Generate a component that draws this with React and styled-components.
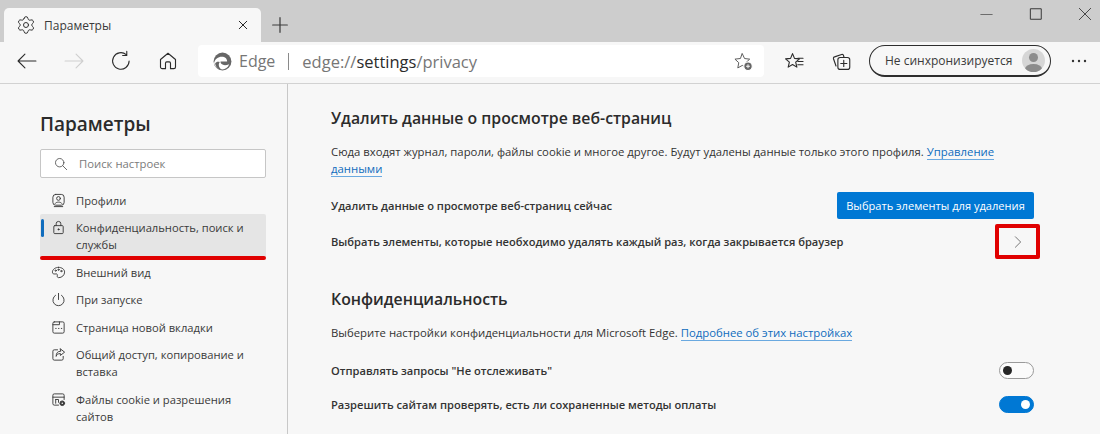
import styled, { createGlobalStyle } from 'styled-components';
import { Settings } from 'lucide-react';

const GlobalStyle = createGlobalStyle`
    html, body {
        margin: 0;
        padding: 0;
        height: 100%;
        overflow: hidden;
        background: #f7f7f7;
    }
    * {
        box-sizing: border-box;
    }
    #root {
        font-family: 'Open Sans', 'Noto Sans', sans-serif;
    }
`;

const Window = styled.div`
    width: 1100px;
    height: 434px;
    display: flex;
    flex-direction: column;
    overflow: hidden;
    color: #2b2b2b;
`;
const TitleBar = styled.div`
    height: 42px;
    flex: none;
    background: #cdcdcd;
    display: flex;
    align-items: flex-end;
    padding-left: 4px;
`;
const Tab = styled.div`
    width: 257px;
    height: 34px;
    background: #f7f7f7;
    border-radius: 5px 5px 0 0;
    display: flex;
    align-items: center;
    padding: 0 12px 0 12px;
    gap: 8px;
    font-size: 12px;
    color: #3a3a3a;
`;
const TabTitle = styled.span`
    flex: 1;
`;
const NewTab = styled.div`
    width: 38px;
    height: 34px;
    display: flex;
    align-items: center;
    justify-content: center;
`;
const WindowControls = styled.div`
    margin-left: auto;
    margin-right: -9px;
    height: 42px;
    display: flex;
    align-items: flex-start;
    padding-top: 6px;
`;
const WindowButton = styled.div`
    width: 49px;
    height: 16px;
    display: flex;
    align-items: center;
    justify-content: center;
`;
const Toolbar = styled.div`
    height: 42px;
    flex: none;
    background: #f7f7f7;
    border-bottom: 1px solid #d2d2d2;
    display: flex;
    align-items: center;
    padding: 0 0 3px 8px;
`;
const ToolButton = styled.div`
    width: ${(p) => p.$w || 47}px;
    height: 32px;
    flex: none;
    display: flex;
    align-items: center;
    justify-content: center;
`;
const AddressBar = styled.div`
    width: 566px;
    height: 32px;
    margin-left: 2px;
    flex: none;
    background: #fff;
    border-radius: 4px;
    display: flex;
    align-items: center;
    padding: 0 11px 0 15px;
    font-size: 16px;
    color: #767676;
`;
const BrandName = styled.span`
    margin-left: 7px;
`;
const Divider = styled.span`
    width: 1px;
    height: 17px;
    background: #8a8a8a;
    margin: 0 13px;
`;
const UrlText = styled.span`
    font-size: 16.5px;
`;
const Strong = styled.span`
    color: #2b2b2b;
`;
const AddressEnd = styled.div`
    margin-left: auto;
    display: flex;
    align-items: center;
`;
const SyncPill = styled.div`
    width: 182px;
    height: 32px;
    margin-left: 11px;
    flex: none;
    border: 1px solid #2e2e2e;
    border-bottom-width: 2px;
    border-radius: 16px;
    display: flex;
    align-items: center;
    justify-content: space-between;
    padding: 0 5px 0 15px;
    font-size: 12px;
    color: #3a3a3a;
`;
const Avatar = styled.div`
    width: 23px;
    height: 23px;
    border-radius: 50%;
    overflow: hidden;
    background: #d6d6d6;
`;
const Body = styled.div`
    flex: 1;
    min-height: 0;
    display: flex;
`;
const Sidebar = styled.aside`
    width: 288px;
    flex: none;
    border-right: 1px solid #c8c8c8;
    padding: 27px 21px 0 40px;
`;
const SidebarTitle = styled.h1`
    margin: 0 0 11px;
    font-size: 19px;
    line-height: 27px;
    font-weight: 600;
    color: #2b2b2b;
`;
const Search = styled.div`
    height: 29px;
    background: #fff;
    border: 1px solid #c6c6c6;
    border-radius: 2px;
    display: flex;
    align-items: center;
    padding-left: 13px;
    gap: 11px;
    font-size: 11.3px;
    color: #7b7b7b;
    margin-bottom: 8.5px;
`;
const NavList = styled.nav`
    display: flex;
    flex-direction: column;
`;
const NavItem = styled.div`
    position: relative;
    display: flex;
    align-items: flex-start;
    padding: 5px 6px 5px 10px;
    gap: 10px;
    font-size: 11.2px;
    line-height: 17px;
    color: #3a3a3a;
    background: ${(p) => (p.$active ? '#e5e5e5' : 'transparent')};
    border-radius: 2px;
    margin-bottom: 0.5px;
`;
const NavIcon = styled.span`
    width: 16px;
    height: 17px;
    flex: none;
    display: flex;
    align-items: center;
    justify-content: center;
`;
const ActiveMark = styled.span`
    position: absolute;
    left: 1px;
    top: 5px;
    width: 3px;
    height: 18px;
    border-radius: 2px;
    background: #0f6cbd;
`;
const RedLine = styled.span`
    position: absolute;
    left: 0;
    right: 0;
    bottom: -2px;
    height: 4px;
    border-radius: 2px;
    background: #e00000;
`;
const Main = styled.main`
    flex: 1;
    padding: 23px 66px 0 43px;
`;
const Heading = styled.h2`
    margin: ${(p) => p.$top || 0}px 0 0;
    font-size: 15.8px;
    line-height: 22px;
    font-weight: 600;
    color: #2b2b2b;
`;
const Description = styled.p`
    margin: 14px 0 0;
    font-size: 11.33px;
    line-height: 17px;
    color: #333;
`;
const Link = styled.a`
    color: #0f6cbd;
    border-bottom: 1px solid #6aa9e0;
`;
const SettingRow = styled.div`
    display: flex;
    align-items: center;
    justify-content: space-between;
    height: ${(p) => p.$h || 36}px;
    margin-top: ${(p) => p.$top || 0}px;
    font-size: 11.13px;
    font-weight: 600;
    color: #333;
`;
const BlueButton = styled.button`
    width: 197px;
    height: 27px;
    border: 0;
    border-radius: 2px;
    background: #0078d4;
    color: #fff;
    font: 500 11.1px 'Open Sans', 'Noto Sans', sans-serif;
    padding: 0;
`;
const ChevronBox = styled.div`
    position: relative;
    width: 45px;
    height: 35px;
    margin-right: -6px;
    border: 4px solid #e00000;
    border-radius: 2px;
    display: flex;
    align-items: center;
    justify-content: center;
`;
const Toggle = styled.div`
    width: 35px;
    height: 17px;
    border-radius: 9px;
    border: 1px solid ${(p) => (p.$on ? '#0078d4' : '#9a9a9a')};
    background: ${(p) => (p.$on ? '#0078d4' : '#fbfbfb')};
    display: flex;
    align-items: center;
    justify-content: ${(p) => (p.$on ? 'flex-end' : 'flex-start')};
    padding: 0 3px;
`;
const Knob = styled.span`
    width: 9px;
    height: 9px;
    border-radius: 50%;
    background: ${(p) => (p.$on ? '#fff' : '#252525')};
`;

const Ico = ({ size = 16, stroke = '#3c3c3c', sw = 1.1, children }) => (
    <svg width={size} height={size} viewBox="0 0 16 16" fill="none" stroke={stroke} strokeWidth={sw} strokeLinecap="round" strokeLinejoin="round">
        {children}
    </svg>
);

const navItems = [
    { label: 'Профили', icon: <><rect x="2" y="1.500" width="12" height="11.500" rx="3" /><circle cx="8" cy="5.800" r="2" /><path d="M4.500 11c.8-1.800 6.200-1.800 7 0M3.500 14.500h9" /></> },
    { label: 'Конфиденциальность, поиск и службы', active: true, icon: <><rect x="3" y="6" width="10" height="8.500" rx="1" /><path d="M5.500 6V4a2.500 2.500 0 0 1 5 0v2" /><circle cx="8" cy="10" r=".6" fill="#3c3c3c" /></> },
    { label: 'Внешний вид', icon: <><path d="M8 2.500c-3.600 0-6.500 2.300-6.500 5.200 0 2.200 2.400 2 3.800 1.800 1.500-.2 1.700 1 1.400 2-.3 1.200.4 2 1.500 2 3.500 0 6.300-2.700 6.300-5.900 0-3-2.800-5.100-6.500-5.100z" /><circle cx="5" cy="6" r=".7" /><circle cx="8" cy="5" r=".7" /><circle cx="11" cy="6.500" r=".7" /></> },
    { label: 'При запуске', icon: <path d="M8 1.500v6.500M4.800 3.500a6 6 0 1 0 6.400 0" /> },
    { label: 'Страница новой вкладки', icon: <><rect x="2" y="2" width="12" height="12" rx="1.500" /><path d="M2 5h7V2M5 9h.5M8 9h.5M11 9h.5" /></> },
    { label: 'Общий доступ, копирование и вставка', icon: <><path d="M7 3H3.500A1.500 1.500 0 0 0 2 4.500v8A1.500 1.500 0 0 0 3.500 14h8a1.500 1.500 0 0 0 1.500-1.500V10" /><path d="M10 2l4.500 3.500L10 9V7c-2.500 0-4 1-4.500 3 0-3.500 1.500-5.500 4.500-5.500z" /></> },
    { label: 'Файлы cookie и разрешения сайтов', icon: <><path d="M8 14H3.500A1.500 1.500 0 0 1 2 12.500v-9A1.500 1.500 0 0 1 3.500 2h9A1.500 1.500 0 0 1 14 3.500V8M2 5.500h12M5 8v4M5 8h3v3" /><circle cx="12" cy="12" r="2.500" fill="#3c3c3c" /><circle cx="12" cy="12" r=".8" fill="#fff" stroke="none" /></> },
];

function App() {
    return (
        <Window>
            <GlobalStyle />
            <TitleBar>
                <Tab>
                    <Settings size={20} strokeWidth={1.200} color="#333" />
                    <TabTitle>Параметры</TabTitle>
                    <Ico size={12} stroke="#222" sw={1.300}>
                        <path d="M3 3l10 10M13 3L3 13" />
                    </Ico>
                </Tab>
                <NewTab>
                    <Ico size={18} sw={1.100}>
                        <path d="M8 1.500v13M1.500 8h13" />
                    </Ico>
                </NewTab>
                <WindowControls>
                    <WindowButton>
                        <Ico size={13} stroke="#555" sw={1}><path d="M1 8h14" /></Ico>
                    </WindowButton>
                    <WindowButton>
                        <Ico size={14} stroke="#333" sw={1.100}><rect x="2" y="2" width="12" height="12" /></Ico>
                    </WindowButton>
                    <WindowButton>
                        <Ico size={14} stroke="#333" sw={1}><path d="M1.500 1.500l13 13M14.500 1.500l-13 13" /></Ico>
                    </WindowButton>
                </WindowControls>
            </TitleBar>
            <Toolbar>
                <ToolButton $w={38}>
                    <Ico size={22} stroke="#2b2b2b" sw={0.800}><path d="M14.500 8h-13M6.500 3l-5 5 5 5" /></Ico>
                </ToolButton>
                <ToolButton $w={56}>
                    <Ico size={22} stroke="#cfcfcf" sw={0.800}><path d="M1.500 8h13M9.500 3l5 5-5 5" /></Ico>
                </ToolButton>
                <ToolButton $w={38}>
                    <Ico size={22} stroke="#2b2b2b" sw={0.800}><path d="M13.900 8a6 6 0 1 1-2.100-4.600M12.200 1v3h-3" /></Ico>
                </ToolButton>
                <ToolButton $w={56}>
                    <Ico size={20} stroke="#2b2b2b" sw={0.900}><path d="M2 6.800L8 1.800l6 5v6a1.300 1.300 0 0 1-1.300 1.300H10V9.800a1.100 1.100 0 0 0-1-1.100H7a1.100 1.100 0 0 0-1 1.100v4.300H3.300A1.300 1.300 0 0 1 2 12.800z" /></Ico>
                </ToolButton>
                <AddressBar>
                    <svg width="19" height="19" viewBox="0 0 16 16">
                        <circle cx="8" cy="8" r="7.500" fill="#666" />
                        <path d="M.9 9.300C1.500 6 4.300 4 7.400 4c2.700 0 4.600 1.700 4.500 4.100H6.300c-.2 2.600 3 4 7.300 2.300-1 2.900-3.700 4.600-6.300 4.300C3.600 14.300 1.200 12 .9 9.300z" fill="#fff" />
                        <path d="M1.800 9.600C2.300 13 5 15 7.800 15.200 4.900 13.500 4.100 10.400 5.700 8.400 4.200 7.800 2.500 8.200 1.800 9.600z" fill="#666" />
                    </svg>
                    <BrandName>Edge</BrandName>
                    <Divider />
                    <UrlText>edge://<Strong>settings</Strong>/privacy</UrlText>
                    <AddressEnd>
                        <Ico size={19} stroke="#555" sw={0.800}>
                            <path d="M7 1.500l1.900 4 4.300.5-3.200 3 .8 4.400L7 11.300l-3.800 2.100.8-4.400-3.200-3 4.300-.5z" />
                            <circle cx="11.800" cy="12" r="3.600" fill="#666" stroke="#fff" strokeWidth="1" />
                            <path d="M11.800 10.700v2.600M10.500 12h2.600" stroke="#fff" />
                        </Ico>
                    </AddressEnd>
                </AddressBar>
                <ToolButton $w={60}>
                    <Ico size={21} stroke="#2b2b2b" sw={0.850}>
                        <path d="M6.500 2l1.500 3.600 3.800.4-2.900 2.500.9 3.800-3.300-2-3.300 2 .9-3.800L1.200 6l3.800-.4z" />
                        <path d="M10.500 5.500h4M10.500 8h4M10.500 10.500h4" />
                    </Ico>
                </ToolButton>
                <ToolButton $w={34}>
                    <Ico size={20} stroke="#2b2b2b" sw={0.900}>
                        <path d="M4 12L2 6.200a1.200 1.200 0 0 1 .8-1.500L8.500 2.800a1.200 1.200 0 0 1 1.500.8L10.400 5" />
                        <rect x="5.500" y="5.200" width="9.500" height="9.500" rx="1.800" />
                        <path d="M10.200 7.500v4.900M7.800 10h4.900" />
                    </Ico>
                </ToolButton>
                <SyncPill>
                    Не синхронизируется
                    <Avatar>
                        <svg width="23" height="23" viewBox="0 0 23 23">
                            <circle cx="11.500" cy="8.500" r="4.500" fill="#8c8c8c" />
                            <ellipse cx="11.500" cy="20" rx="8.500" ry="5" fill="#8c8c8c" />
                        </svg>
                    </Avatar>
                </SyncPill>
                <ToolButton $w={56}>
                    <svg width="16" height="4" viewBox="0 0 16 4" fill="#333">
                        <circle cx="2" cy="2" r="1.200" />
                        <circle cx="8" cy="2" r="1.200" />
                        <circle cx="14" cy="2" r="1.200" />
                    </svg>
                </ToolButton>
            </Toolbar>
            <Body>
                <Sidebar>
                    <SidebarTitle>Параметры</SidebarTitle>
                    <Search>
                        <Ico size={14} stroke="#555" sw={1}>
                            <circle cx="6.500" cy="6.500" r="4.800" />
                            <path d="M10 10l4.500 4.500" />
                        </Ico>
                        Поиск настроек
                    </Search>
                    <NavList>
                        {navItems.map((item) => (
                            <NavItem key={item.label} $active={item.active}>
                                {item.active && <ActiveMark />}
                                <NavIcon>
                                    <Ico size={15} sw={1}>{item.icon}</Ico>
                                </NavIcon>
                                <span>{item.label}</span>
                                {item.active && <RedLine />}
                            </NavItem>
                        ))}
                    </NavList>
                </Sidebar>
                <Main>
                    <Heading>Удалить данные о просмотре веб-страниц</Heading>
                    <Description>
                        Сюда входят журнал, пароли, файлы cookie и многое другое. Будут удалены данные только этого профиля. <Link>Управление данными</Link>
                    </Description>
                    <SettingRow $h={37} $top={10}>
                        Удалить данные о просмотре веб-страниц сейчас
                        <BlueButton>Выбрать элементы для удаления</BlueButton>
                    </SettingRow>
                    <SettingRow $h={35}>
                        Выбрать элементы, которые необходимо удалять каждый раз, когда закрывается браузер
                        <ChevronBox>
                            <Ico size={14} stroke="#666" sw={1}><path d="M5 2l6 6-6 6" /></Ico>
                        </ChevronBox>
                    </SettingRow>
                    <Heading $top={29}>Конфиденциальность</Heading>
                    <Description>
                        Выберите настройки конфиденциальности для Microsoft Edge. <Link>Подробнее об этих настройках</Link>
                    </Description>
                    <SettingRow $h={36} $top={11}>
                        Отправлять запросы "Не отслеживать"
                        <Toggle><Knob /></Toggle>
                    </SettingRow>
                    <SettingRow $h={32}>
                        Разрешить сайтам проверять, есть ли сохраненные методы оплаты
                        <Toggle $on><Knob $on /></Toggle>
                    </SettingRow>
                </Main>
            </Body>
        </Window>
    );
}

export default App;
